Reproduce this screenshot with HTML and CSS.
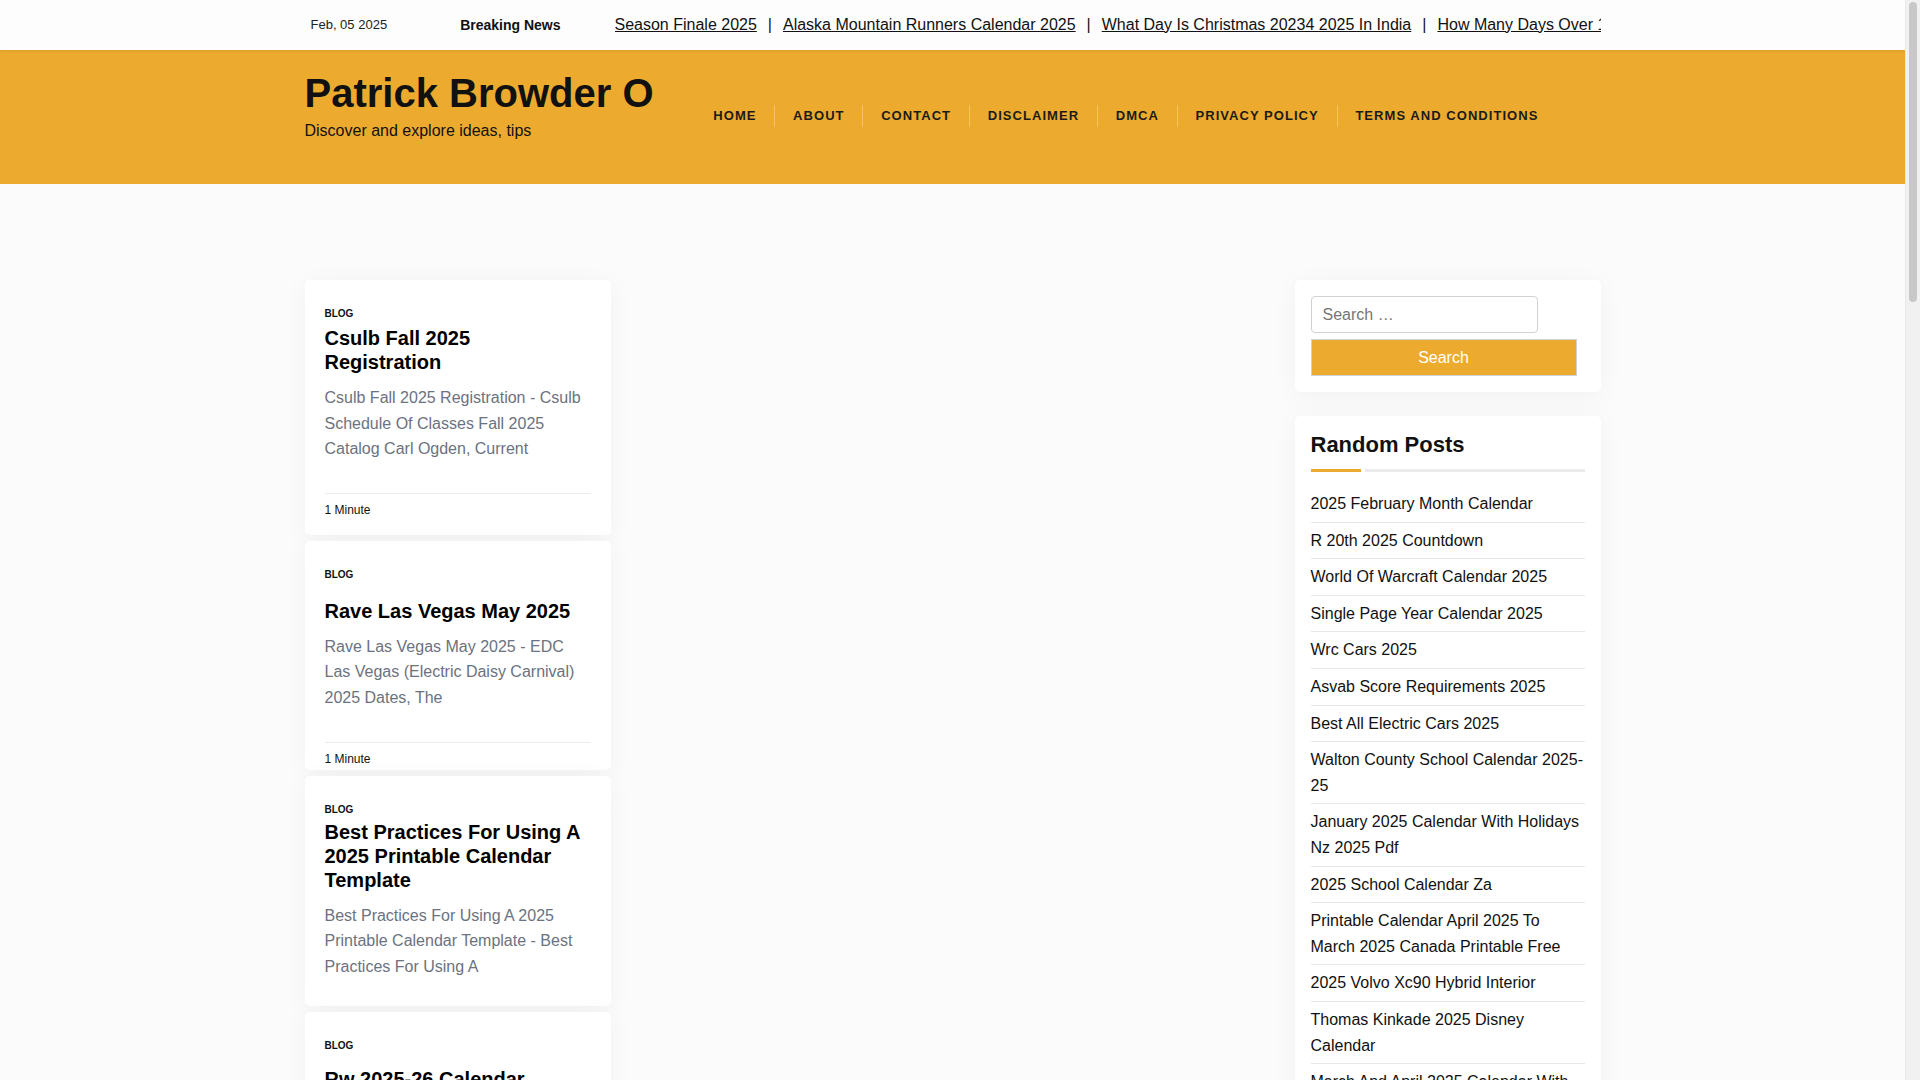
FILE: index.html
```html
<!DOCTYPE html>
<html lang="en">
<head>
<meta charset="utf-8">
<title>Patrick Browder O</title>
<link rel="stylesheet" href="styles.css">
</head>
<body>
<div class="topbar">
  <div class="container topbar-inner">
    <span class="date">Feb, 05 2025</span>
    <span class="breaking">Breaking News</span>
    <div class="ticker">
      <a href="#">Season Finale 2025</a><span class="sep">|</span><a href="#">Alaska Mountain Runners Calendar 2025</a><span class="sep">|</span><a href="#">What Day Is Christmas 20234 2025 In India</a><span class="sep">|</span><a href="#">How Many Days Over 100 Until 2025</a><span class="sep">|</span><a href="#">Rw 2025-26 Calendar</a>
    </div>
  </div>
</div>

<header class="header">
  <div class="container header-inner">
    <div class="brand">
      <div class="site-title">Patrick Browder O</div>
      <div class="tagline">Discover and explore ideas, tips</div>
    </div>
    <nav class="nav">
      <a href="#" class="nav-item">HOME</a>
      <a href="#" class="nav-item">ABOUT</a>
      <a href="#" class="nav-item">CONTACT</a>
      <a href="#" class="nav-item">DISCLAIMER</a>
      <a href="#" class="nav-item">DMCA</a>
      <a href="#" class="nav-item">PRIVACY POLICY</a>
      <a href="#" class="nav-item">TERMS AND CONDITIONS</a>
    </nav>
  </div>
</header>

<main class="container main">
  <div class="posts">
    <article class="card">
      <div class="cat">BLOG</div>
      <h2 class="card-title">Csulb Fall 2025 Registration</h2>
      <p class="excerpt">Csulb Fall 2025 Registration - Csulb Schedule Of Classes Fall 2025 Catalog Carl Ogden, Current</p>
      <div class="card-foot">1 Minute</div>
    </article>
    <article class="card card-b">
      <div class="cat">BLOG</div>
      <h2 class="card-title">Rave Las Vegas May 2025</h2>
      <p class="excerpt">Rave Las Vegas May 2025 - EDC Las Vegas (Electric Daisy Carnival) 2025 Dates, The</p>
      <div class="card-foot">1 Minute</div>
    </article>
    <article class="card card-c">
      <div class="cat">BLOG</div>
      <h2 class="card-title">Best Practices For Using A 2025 Printable Calendar Template</h2>
      <p class="excerpt">Best Practices For Using A 2025 Printable Calendar Template - Best Practices For Using A</p>
    </article>
    <article class="card card-d">
      <div class="cat">BLOG</div>
      <h2 class="card-title">Rw 2025-26 Calendar Template</h2>
      <p class="excerpt">Rw 2025-26 Calendar Template - Rw 2025-26 Calendar, Current</p>
      <div class="card-foot">1 Minute</div>
    </article>
  </div>
  <div class="middle"></div>
  <aside class="sidebar">
    <div class="widget search-widget">
      <input class="search-input" type="search" placeholder="Search …">
      <button class="search-btn" type="button">Search</button>
    </div>
    <div class="widget posts-widget">
      <h3 class="widget-title">Random Posts</h3>
      <div class="widget-rule"><span class="rule-accent"></span><span class="rule-rest"></span></div>
      <ul class="rp-list">
        <li><a href="#">2025 February Month Calendar</a></li>
        <li><a href="#">R 20th 2025 Countdown</a></li>
        <li><a href="#">World Of Warcraft Calendar 2025</a></li>
        <li><a href="#">Single Page Year Calendar 2025</a></li>
        <li><a href="#">Wrc Cars 2025</a></li>
        <li><a href="#">Asvab Score Requirements 2025</a></li>
        <li><a href="#">Best All Electric Cars 2025</a></li>
        <li><a href="#">Walton County School Calendar 2025-25</a></li>
        <li><a href="#">January 2025 Calendar With Holidays Nz 2025 Pdf</a></li>
        <li><a href="#">2025 School Calendar Za</a></li>
        <li><a href="#">Printable Calendar April 2025 To March 2025 Canada Printable Free</a></li>
        <li><a href="#">2025 Volvo Xc90 Hybrid Interior</a></li>
        <li><a href="#">Thomas Kinkade 2025 Disney Calendar</a></li>
        <li><a href="#">March And April 2025 Calendar With Holidays</a></li>
      </ul>
    </div>
  </aside>
</main>
<div class="scrollbar"><div class="scroll-thumb"></div></div>
</body>
</html>
```

FILE: styles.css
```css
* { box-sizing: border-box; }

html, body {
  margin: 0;
  padding: 0;
}

body {
  background: #fbfbfb;
  font-family: "Liberation Sans", Arial, sans-serif;
  color: #111;
  padding-right: 15px;
}

a { color: inherit; }

.container {
  width: 1296px;
  margin: 0 auto;
}

/* fake browser scrollbar (overlay on the right edge) */
.scrollbar {
  position: fixed;
  top: 0;
  right: 0;
  width: 15px;
  height: 100vh;
  background: #f1f1f1;
  border-left: 1px solid #e8e8e8;
  z-index: 10;
}

.scroll-thumb {
  margin: 2px 3px 0 3px;
  height: 300px;
  border-radius: 4px;
  background: #c8c8c8;
}

/* top bar */
.topbar {
  background: #fdfdfd;
  height: 50px;
  box-shadow: 0 1px 3px rgba(0, 0, 0, 0.08);
  position: relative;
  z-index: 2;
}

.topbar-inner {
  display: flex;
  align-items: center;
  height: 49px;
  padding-left: 6px;
}

.date {
  font-size: 13px;
  color: #222;
  white-space: nowrap;
}

.breaking {
  font-size: 14px;
  font-weight: bold;
  color: #111;
  margin-left: 73px;
  white-space: nowrap;
}

.ticker {
  flex: 1;
  margin-left: 54px;
  overflow: hidden;
  white-space: nowrap;
  font-size: 16px;
  color: #111;
}

.ticker a {
  color: #111;
  text-decoration: underline;
}

.ticker .sep {
  margin: 0 11px;
  color: #111;
}

/* header */
.header {
  background: #ecab2e;
  height: 134px;
}

.header-inner {
  display: flex;
  align-items: flex-start;
  height: 134px;
}

.brand {
  margin-top: 19px;
}

.site-title {
  font-size: 40px;
  font-weight: bold;
  line-height: 48px;
  color: #111;
}

.tagline {
  margin-top: 2px;
  font-size: 16px;
  line-height: 24px;
  color: #111;
}

.nav {
  display: flex;
  margin-top: 55px;
  margin-left: 42px;
}

.nav-item {
  font-size: 13px;
  font-weight: bold;
  letter-spacing: 1.05px;
  line-height: 22px;
  padding: 0 17.8px;
  color: #1b1b1b;
  text-decoration: none;
  border-left: 1px solid rgba(255, 255, 255, 0.28);
}

.nav-item:first-child {
  border-left: none;
}

/* main layout */
.main {
  display: grid;
  grid-template-columns: 306px 1fr 306px;
  gap: 24px;
  margin-top: 96px;
}

.posts {
  display: flex;
  flex-direction: column;
  gap: 6px;
}

.card {
  background: #fff;
  border-radius: 5px;
  box-shadow: 0 4px 26px rgba(0, 0, 0, 0.045);
  padding: 27px 20px 17px;
}

.cat {
  font-size: 10px;
  font-weight: bold;
  line-height: 14px;
  color: #111;
}

.card-title {
  margin: 5px 0 0;
  font-size: 20px;
  line-height: 24px;
  font-weight: bold;
  color: #000;
}

.card-b .card-title { margin-top: 17px; }
.card-b { padding-bottom: 3px; }
.card-c .card-title { margin-top: 3px; }
.card-c { padding-bottom: 27px; }
.card-d .card-title { margin-top: 14px; }

.excerpt {
  margin: 11px 0 0;
  font-size: 16px;
  line-height: 1.6;
  color: #6b7280;
}

.card-foot {
  margin-top: 31px;
  border-top: 1px solid #ececec;
  padding-top: 8px;
  font-size: 12px;
  line-height: 16px;
  color: #111;
}

/* sidebar */
.sidebar {
  display: flex;
  flex-direction: column;
  gap: 24px;
}

.widget {
  background: #fff;
  border-radius: 5px;
  box-shadow: 0 4px 26px rgba(0, 0, 0, 0.045);
  padding: 16px;
}

.search-widget {
  display: flex;
  flex-direction: column;
  align-items: flex-start;
  gap: 6px;
}

.search-input {
  width: 227px;
  height: 37px;
  border: 1px solid #cfd3d8;
  border-radius: 4px;
  padding: 0 11px;
  font-family: "Liberation Sans", Arial, sans-serif;
  font-size: 16px;
  color: #333;
  background: #fff;
}

.search-input::placeholder {
  color: #767676;
}

.search-btn {
  width: 266px;
  height: 37px;
  border: 1px solid #cfd3d8;
  background: #ecab2e;
  color: #fff;
  font-family: "Liberation Sans", Arial, sans-serif;
  font-size: 16px;
  padding: 0;
}

.widget-title {
  margin: 0;
  font-size: 22px;
  line-height: 26px;
  font-weight: bold;
  color: #111;
}

.widget-rule {
  display: flex;
  gap: 4px;
  margin-top: 11px;
  height: 3px;
}

.rule-accent {
  width: 50px;
  background: #ecab2e;
}

.rule-rest {
  flex: 1;
  background: #ebebeb;
}

.rp-list {
  list-style: none;
  margin: 14px 0 0;
  padding: 0;
}

.rp-list li {
  font-size: 16px;
  line-height: 25.6px;
  padding: 5px 0;
  border-bottom: 1px solid #e8e8e8;
}

.rp-list a {
  color: #111;
  text-decoration: none;
}
```
